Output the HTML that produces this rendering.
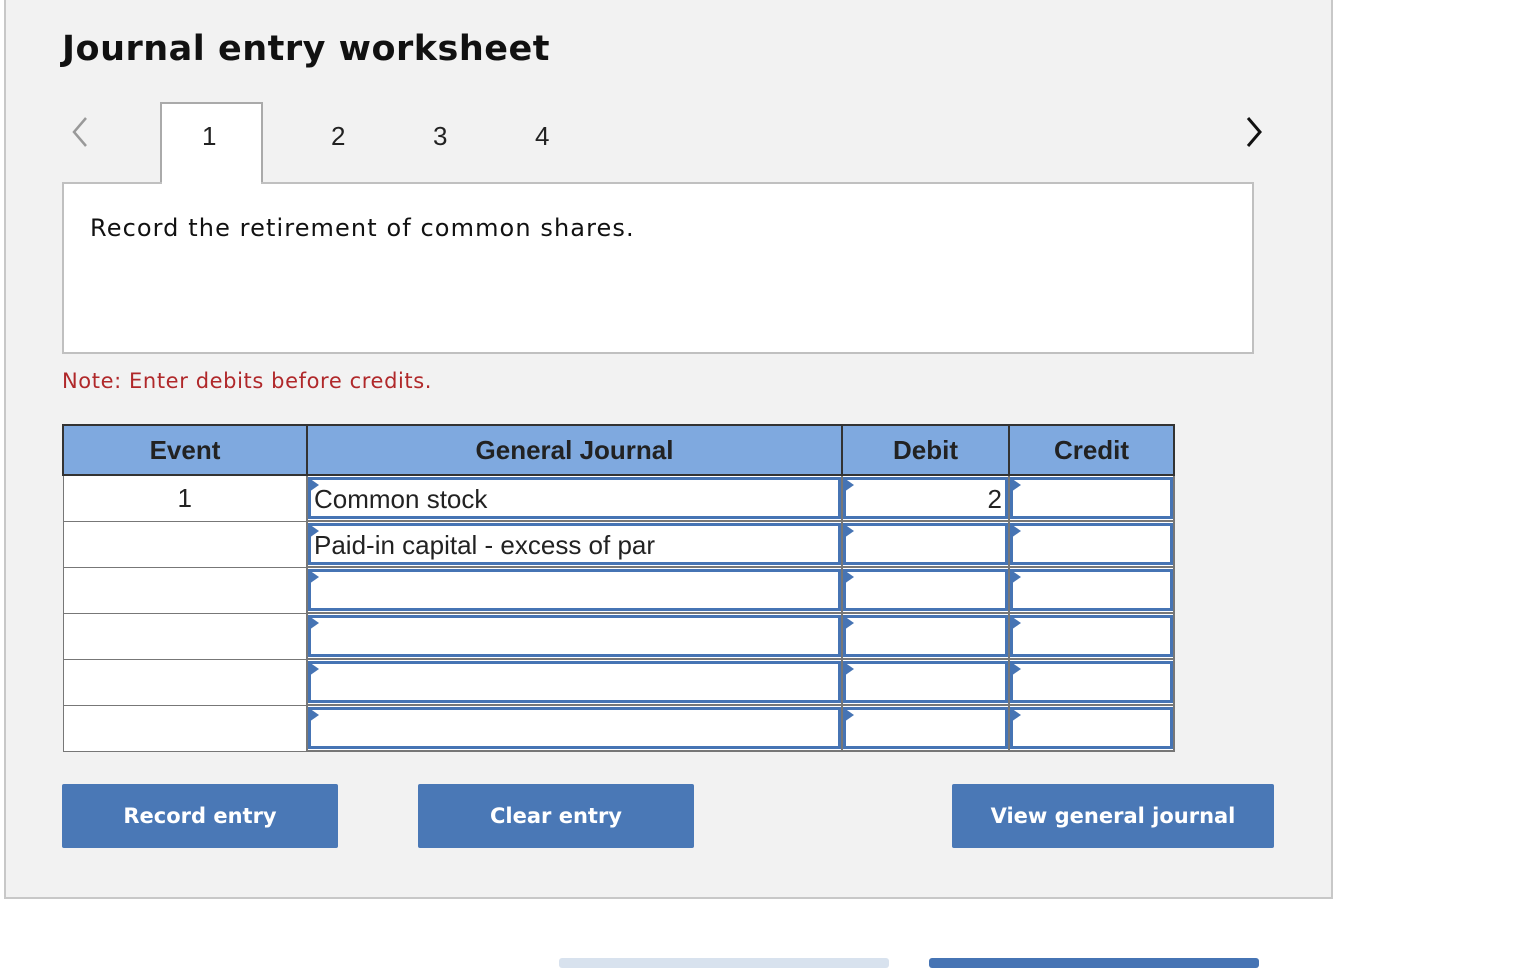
<!DOCTYPE html>
<html><head><meta charset="utf-8"><style>
body{margin:0;width:1520px;height:964px;background:#fff;position:relative;overflow:hidden;font-family:"Liberation Sans",sans-serif}
.a{position:absolute}
.panel{left:4px;top:-2px;width:1325px;height:897px;background:#f2f2f2;border:2px solid #c8c8c8}
.title{left:62px;top:29px;font:bold 35px "DejaVu Sans",sans-serif;color:#111;letter-spacing:0.5px}
.tab{top:102px;width:99px;height:82px;background:#fff;border:2px solid #aaa;border-bottom:none;left:160px}
.num{font-size:26px;color:#222;top:121px}
.box{left:62px;top:182px;width:1188px;height:168px;background:#fff;border:2px solid #c0c0c0}
.txt{left:90px;top:214px;font:24px "DejaVu Sans",sans-serif;color:#111;letter-spacing:1.1px}
.note{left:62px;top:369px;font:21px "DejaVu Sans",sans-serif;color:#b0282a;letter-spacing:0.6px}
table{position:absolute;left:62px;top:424px;border-collapse:collapse}
th{background:#7fa9df;height:48px;font-size:26px;font-weight:bold;color:#222;border:2px solid #333;padding:0}
td{height:44px;border:1px solid #777;padding:0;position:relative;background:#fff;font-size:26px;color:#222}
td.i{border:2px solid #777}
td.i div{position:absolute;left:0px;top:1px;right:0px;bottom:1px;border:3px solid #4674b4;box-sizing:border-box;padding-left:3px;line-height:38px}
td.i div::before{content:"";position:absolute;left:-2px;top:-2px;border-left:10px solid #4674b4;border-top:7px solid transparent;border-bottom:7px solid transparent}
.btn{top:784px;height:64px;background:#4a78b6;color:#fff;font:bold 21px "DejaVu Sans",sans-serif;display:flex;align-items:center;justify-content:center;border-radius:2px}
</style></head><body>
<div class="a panel"></div>
<div class="a title">Journal entry worksheet</div>
<svg class="a" style="left:66px;top:116px" width="24" height="32"><path d="M20 2 L8 16 L20 30" stroke="#999" stroke-width="2.5" fill="none"/></svg>
<svg class="a" style="left:1244px;top:116px" width="24" height="32"><path d="M4 2 L16 16 L4 30" stroke="#111" stroke-width="3" fill="none"/></svg>
<div class="a tab"></div>
<div class="a num" style="left:202px">1</div>
<div class="a num" style="left:331px">2</div>
<div class="a num" style="left:433px">3</div>
<div class="a num" style="left:535px">4</div>
<div class="a box"></div>
<div class="a tab" style="top:170px;height:16px;border:none;left:162px"></div>
<div class="a txt">Record the retirement of common shares.</div>
<div class="a note">Note: Enter debits before credits.</div>
<table>
<tr><th style="width:242px">Event</th><th style="width:533px">General Journal</th><th style="width:165px">Debit</th><th style="width:163px">Credit</th></tr>
<tr><td style="text-align:center">1</td><td class="i"><div>Common stock</div></td><td class="i"><div style="text-align:right;padding-right:3px">2</div></td><td class="i"><div></div></td></tr>
<tr><td></td><td class="i"><div>Paid-in capital - excess of par</div></td><td class="i"><div></div></td><td class="i"><div></div></td></tr>
<tr><td></td><td class="i"><div></div></td><td class="i"><div></div></td><td class="i"><div></div></td></tr>
<tr><td></td><td class="i"><div></div></td><td class="i"><div></div></td><td class="i"><div></div></td></tr>
<tr><td></td><td class="i"><div></div></td><td class="i"><div></div></td><td class="i"><div></div></td></tr>
<tr><td></td><td class="i"><div></div></td><td class="i"><div></div></td><td class="i"><div></div></td></tr>
</table>
<div class="a btn" style="left:62px;width:276px">Record entry</div>
<div class="a btn" style="left:418px;width:276px">Clear entry</div>
<div class="a btn" style="left:952px;width:322px">View general journal</div>
<div class="a" style="left:559px;top:958px;width:330px;height:10px;background:#d8e2ee;border-radius:3px"></div>
<div class="a" style="left:929px;top:958px;width:330px;height:10px;background:#4674b4;border-radius:3px"></div>
</body></html>
